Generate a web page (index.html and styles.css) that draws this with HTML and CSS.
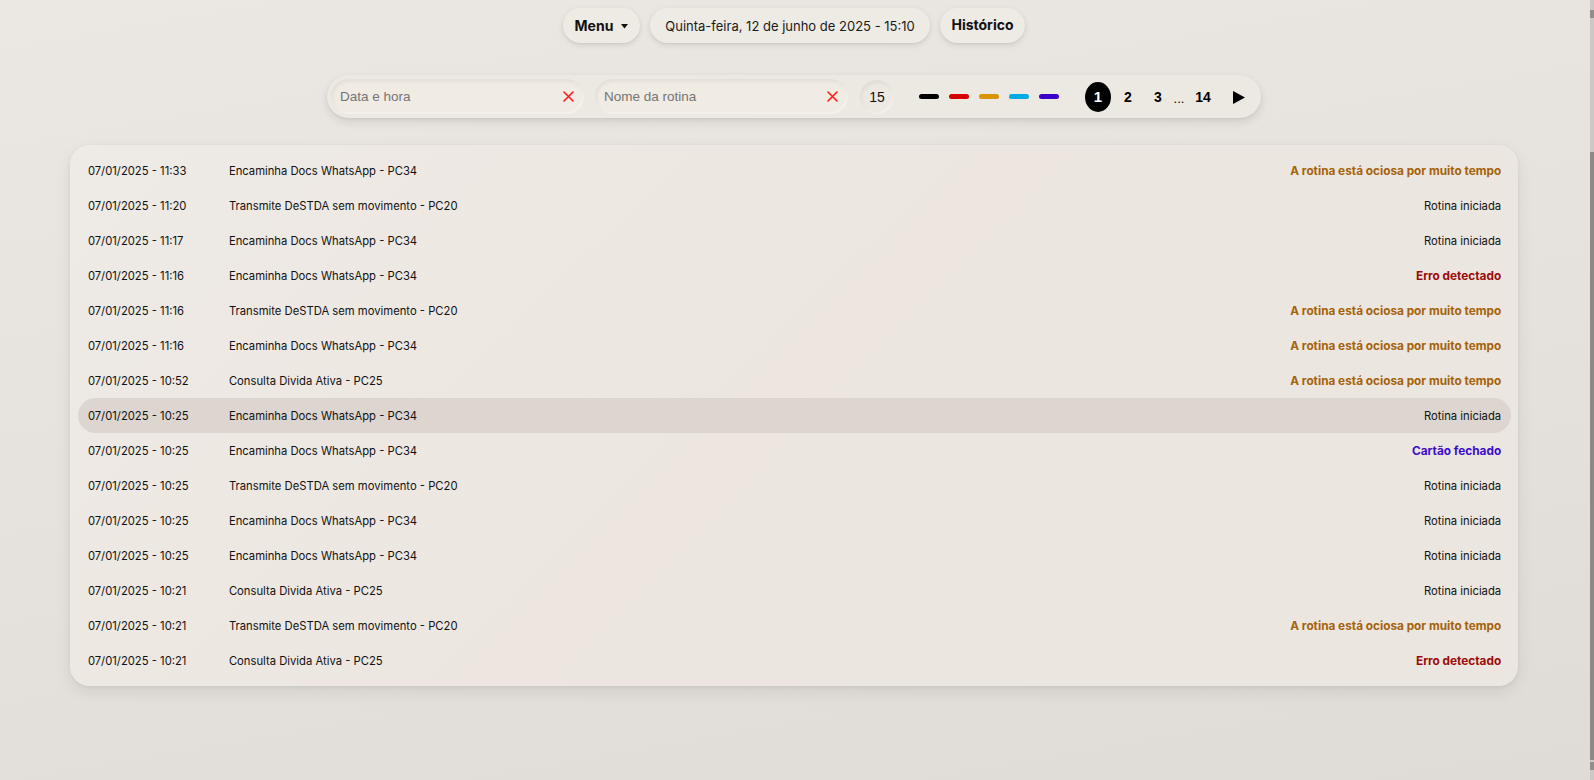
FILE: index.html
```html
<!DOCTYPE html>
<html lang="pt-BR">
<head>
<meta charset="utf-8">
<title>Histórico</title>
<link rel="stylesheet" href="styles.css">
</head>
<body>
<div class="page">
  <header class="topnav">
    <div class="pill menu">Menu <svg class="caret" width="7" height="5" viewBox="0 0 7 5"><polygon points="0,0 7,0 3.5,4.5" fill="#111"/></svg></div>
    <div class="pill date">Quinta-feira, 12 de junho de 2025 - 15:10</div>
    <div class="pill hist">Histórico</div>
  </header>

  <section class="filterbar">
    <div class="field first">
      <span class="placeholder">Data e hora</span>
      <svg class="clear" width="11" height="11" viewBox="0 0 11 11"><path d="M1 1L10 10M10 1L1 10" stroke="#ff1a1a" stroke-width="1.6" stroke-linecap="round"/></svg>
    </div>
    <div class="field">
      <span class="placeholder">Nome da rotina</span>
      <svg class="clear" width="11" height="11" viewBox="0 0 11 11"><path d="M1 1L10 10M10 1L1 10" stroke="#ff1a1a" stroke-width="1.6" stroke-linecap="round"/></svg>
    </div>
    <div class="count">15</div>
    <div class="legend">
      <span class="dash black"></span>
      <span class="dash red"></span>
      <span class="dash orange"></span>
      <span class="dash cyan"></span>
      <span class="dash purple"></span>
    </div>
    <nav class="pager">
      <span class="pg current">1</span>
      <span class="pg">2</span>
      <span class="pg">3</span>
      <span class="ellipsis">...</span>
      <span class="pg last">14</span>
      <span class="next"><svg width="12" height="13" viewBox="0 0 12 13"><polygon points="0,0 12,6.5 0,13" fill="#000"/></svg></span>
    </nav>
  </section>

  <main class="card">
    <div class="row"><span class="date-col">07/01/2025 - 11:33</span><span class="name">Encaminha Docs WhatsApp - PC34</span><span class="status idle">A rotina está ociosa por muito tempo</span></div>
    <div class="row"><span class="date-col">07/01/2025 - 11:20</span><span class="name">Transmite DeSTDA sem movimento - PC20</span><span class="status">Rotina iniciada</span></div>
    <div class="row"><span class="date-col">07/01/2025 - 11:17</span><span class="name">Encaminha Docs WhatsApp - PC34</span><span class="status">Rotina iniciada</span></div>
    <div class="row"><span class="date-col">07/01/2025 - 11:16</span><span class="name">Encaminha Docs WhatsApp - PC34</span><span class="status error">Erro detectado</span></div>
    <div class="row"><span class="date-col">07/01/2025 - 11:16</span><span class="name">Transmite DeSTDA sem movimento - PC20</span><span class="status idle">A rotina está ociosa por muito tempo</span></div>
    <div class="row"><span class="date-col">07/01/2025 - 11:16</span><span class="name">Encaminha Docs WhatsApp - PC34</span><span class="status idle">A rotina está ociosa por muito tempo</span></div>
    <div class="row"><span class="date-col">07/01/2025 - 10:52</span><span class="name">Consulta Divida Ativa - PC25</span><span class="status idle">A rotina está ociosa por muito tempo</span></div>
    <div class="row hover"><span class="date-col">07/01/2025 - 10:25</span><span class="name">Encaminha Docs WhatsApp - PC34</span><span class="status">Rotina iniciada</span></div>
    <div class="row"><span class="date-col">07/01/2025 - 10:25</span><span class="name">Encaminha Docs WhatsApp - PC34</span><span class="status closed">Cartão fechado</span></div>
    <div class="row"><span class="date-col">07/01/2025 - 10:25</span><span class="name">Transmite DeSTDA sem movimento - PC20</span><span class="status">Rotina iniciada</span></div>
    <div class="row"><span class="date-col">07/01/2025 - 10:25</span><span class="name">Encaminha Docs WhatsApp - PC34</span><span class="status">Rotina iniciada</span></div>
    <div class="row"><span class="date-col">07/01/2025 - 10:25</span><span class="name">Encaminha Docs WhatsApp - PC34</span><span class="status">Rotina iniciada</span></div>
    <div class="row"><span class="date-col">07/01/2025 - 10:21</span><span class="name">Consulta Divida Ativa - PC25</span><span class="status">Rotina iniciada</span></div>
    <div class="row"><span class="date-col">07/01/2025 - 10:21</span><span class="name">Transmite DeSTDA sem movimento - PC20</span><span class="status idle">A rotina está ociosa por muito tempo</span></div>
    <div class="row"><span class="date-col">07/01/2025 - 10:21</span><span class="name">Consulta Divida Ativa - PC25</span><span class="status error">Erro detectado</span></div>
  </main>
</div>
<div class="scrollbar"><div class="sb-up"></div><div class="sb-thumb"></div><div class="sb-down"></div></div>
</body>
</html>
```

FILE: styles.css
```css
html, body {
  margin: 0;
  padding: 0;
  height: 100%;
}

body {
  background: linear-gradient(170deg, #ebe8e3 0%, #e5e2dd 55%, #dfdcd7 100%);
  font-family: Inter, "Noto Sans", Roboto, sans-serif;
  color: #111;
  overflow: hidden;
}

.page {
  width: calc(100% - 6px);
  padding-top: 8px;
}

/* ---------- top navigation ---------- */
.topnav {
  display: flex;
  justify-content: center;
  gap: 10px;
}

.pill {
  height: 35px;
  display: flex;
  align-items: center;
  background: #eeeae4;
  border-radius: 18px;
  box-shadow: 0 2px 6px rgba(0, 0, 0, 0.10), 0 1px 2px rgba(0, 0, 0, 0.05);
  box-sizing: border-box;
}

.menu {
  width: 77px;
  justify-content: center;
  gap: 8px;
  font-weight: 700;
  font-size: 14px;
}

.caret {
  display: block;
  margin-top: 1px;
}

.date {
  width: 280px;
  justify-content: center;
  font-size: 13px;
  font-weight: 400;
  color: #1a1a1a;
}

.hist {
  width: 85px;
  justify-content: center;
  font-weight: 700;
  font-size: 14px;
  padding-bottom: 3px;
}

/* ---------- filter bar ---------- */
.filterbar {
  width: 934px;
  height: 43px;
  margin: 32px auto 0;
  box-sizing: border-box;
  padding: 0 8px 0 4px;
  display: flex;
  align-items: center;
  background: #ece8e2;
  border-radius: 22px;
  box-shadow: 0 4px 10px rgba(0, 0, 0, 0.10), 0 1px 3px rgba(0, 0, 0, 0.05);
}

.field {
  width: 253px;
  height: 35px;
  box-sizing: border-box;
  padding: 0 10px 0 9px;
  margin-left: 11px;
  display: flex;
  align-items: center;
  justify-content: space-between;
  background: #f0ebe3;
  border-radius: 18px;
  box-shadow: inset 1px 2px 4px rgba(0, 0, 0, 0.07), inset -1px -1px 3px rgba(255, 255, 255, 0.6);
  font-family: "Liberation Sans", Arial, sans-serif;
}

.field.first {
  margin-left: 0;
}

.placeholder {
  font-size: 13.5px;
  color: #757575;
}

.clear {
  display: block;
}

.count {
  width: 34px;
  height: 34px;
  margin-left: 12px;
  border-radius: 50%;
  display: flex;
  align-items: center;
  justify-content: center;
  font-family: "Liberation Sans", Arial, sans-serif;
  font-size: 14px;
  color: #111;
  background: #ede8e1;
  box-shadow: inset 1px 2px 4px rgba(0, 0, 0, 0.07), inset -1px -1px 3px rgba(255, 255, 255, 0.6);
}

.legend {
  display: flex;
  gap: 10px;
  margin-left: 25px;
}

.dash {
  width: 20px;
  height: 5px;
  border-radius: 3px;
}

.dash.black { background: #000; }
.dash.red { background: #d40000; }
.dash.orange { background: #d99500; }
.dash.cyan { background: #00abe3; }
.dash.purple { background: #3a00cc; }

.pager {
  display: flex;
  align-items: center;
  margin-left: 26px;
  font-family: "Liberation Sans", Arial, sans-serif;
  font-weight: 700;
  font-size: 14px;
  color: #000;
}

.pg {
  width: 26px;
  height: 30px;
  display: flex;
  align-items: center;
  justify-content: center;
  margin-right: 4px;
}

.pg.current {
  background: #000;
  color: #fff;
  border-radius: 50%;
  font-size: 15px;
}

.ellipsis {
  width: 16px;
  margin-left: -4px;
  margin-right: 3px;
  text-align: center;
  font-weight: 400;
  font-size: 13px;
  padding-top: 3px;
}

.pg.last {
  margin-right: 10px;
}

.next {
  width: 26px;
  display: flex;
  justify-content: center;
  padding-top: 2px;
}

.next svg {
  display: block;
}

/* ---------- table card ---------- */
.card {
  width: 91.2%;
  margin: 27px auto 0;
  box-sizing: border-box;
  padding: 8px 7px 8px 8px;
  background: linear-gradient(135deg, #eeeae5 0%, #ede6e0 50%, #ebe6e0 100%);
  border-radius: 20px;
  box-shadow: 0 6px 16px rgba(0, 0, 0, 0.08), 0 1px 4px rgba(0, 0, 0, 0.05);
  display: flex;
  flex-direction: column;
}

.row {
  height: 35px;
  display: flex;
  align-items: center;
  padding: 0 10px;
  border-radius: 18px;
  font-size: 11.25px;
  color: #111;
}

.row.hover {
  background: #ddd6d0;
}

.date-col {
  width: 141px;
  flex: none;
}

.name {
  flex: 1;
}

.status {
  text-align: right;
}

.status.idle,
.status.error,
.status.closed {
  font-weight: 700;
  font-size: 11.8px;
}

.status.idle {
  color: #a5620a;
}

.status.error {
  color: #9c0a0a;
}

.status.closed {
  color: #3a0ccc;
}

/* ---------- simulated scrollbar ---------- */
.scrollbar {
  position: fixed;
  top: 0;
  right: 0;
  width: 4px;
  height: 100%;
  background: #c9c9c9;
}

.sb-up {
  position: absolute;
  top: 10px;
  left: 0;
  width: 4px;
  height: 8px;
  background: #8f8f8f;
}

.sb-thumb {
  position: absolute;
  top: 152px;
  left: 0;
  width: 4px;
  height: 608px;
  background: #8a8a8a;
}

.sb-down {
  position: absolute;
  top: 762px;
  left: 0;
  width: 4px;
  height: 8px;
  background: #8f8f8f;
}
```
